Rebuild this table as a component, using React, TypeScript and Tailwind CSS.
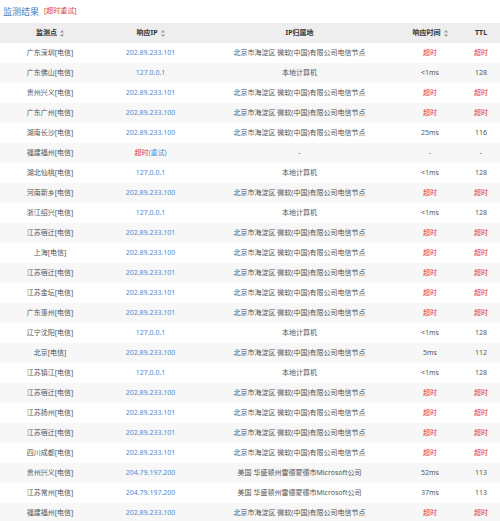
import React from "react";

type Row = {
  node: string;
  ip?: string;
  loc: string;
  time: string;
  ttl: string;
  retry?: boolean;
};

const BJ = "北京市海淀区 微软(中国)有限公司电信节点";
const LOCAL = "本地计算机";
const US = "美国 华盛顿州雷德蒙德市Microsoft公司";

const rows: Row[] = [
  { node: "广东深圳[电信]", ip: "202.89.233.101", loc: BJ, time: "超时", ttl: "超时" },
  { node: "广东佛山[电信]", ip: "127.0.0.1", loc: LOCAL, time: "<1ms", ttl: "128" },
  { node: "贵州兴义[电信]", ip: "202.89.233.101", loc: BJ, time: "超时", ttl: "超时" },
  { node: "广东广州[电信]", ip: "202.89.233.100", loc: BJ, time: "超时", ttl: "超时" },
  { node: "湖南长沙[电信]", ip: "202.89.233.100", loc: BJ, time: "25ms", ttl: "116" },
  { node: "福建福州[电信]", retry: true, loc: "-", time: "-", ttl: "-" },
  { node: "湖北仙桃[电信]", ip: "127.0.0.1", loc: LOCAL, time: "<1ms", ttl: "128" },
  { node: "河南新乡[电信]", ip: "202.89.233.100", loc: BJ, time: "超时", ttl: "超时" },
  { node: "浙江绍兴[电信]", ip: "127.0.0.1", loc: LOCAL, time: "<1ms", ttl: "128" },
  { node: "江苏宿迁[电信]", ip: "202.89.233.101", loc: BJ, time: "超时", ttl: "超时" },
  { node: "上海[电信]", ip: "202.89.233.100", loc: BJ, time: "超时", ttl: "超时" },
  { node: "江苏宿迁[电信]", ip: "202.89.233.101", loc: BJ, time: "超时", ttl: "超时" },
  { node: "江苏金坛[电信]", ip: "202.89.233.101", loc: BJ, time: "超时", ttl: "超时" },
  { node: "广东惠州[电信]", ip: "202.89.233.101", loc: BJ, time: "超时", ttl: "超时" },
  { node: "辽宁沈阳[电信]", ip: "127.0.0.1", loc: LOCAL, time: "<1ms", ttl: "128" },
  { node: "北京[电信]", ip: "202.89.233.100", loc: BJ, time: "5ms", ttl: "112" },
  { node: "江苏镇江[电信]", ip: "127.0.0.1", loc: LOCAL, time: "<1ms", ttl: "128" },
  { node: "江苏宿迁[电信]", ip: "202.89.233.100", loc: BJ, time: "超时", ttl: "超时" },
  { node: "江苏扬州[电信]", ip: "202.89.233.101", loc: BJ, time: "超时", ttl: "超时" },
  { node: "江苏宿迁[电信]", ip: "202.89.233.101", loc: BJ, time: "超时", ttl: "超时" },
  { node: "四川成都[电信]", ip: "202.89.233.101", loc: BJ, time: "超时", ttl: "超时" },
  { node: "贵州兴义[电信]", ip: "204.79.197.200", loc: US, time: "52ms", ttl: "113" },
  { node: "江苏常州[电信]", ip: "204.79.197.200", loc: US, time: "37ms", ttl: "113" },
  { node: "福建福州[电信]", ip: "202.89.233.100", loc: BJ, time: "超时", ttl: "超时" },
];

const cols = "grid grid-cols-[100px_101px_197px_64px_1fr]";

const SortIcon = () => (
  <svg width="4" height="7" viewBox="0 0 4 7" className="ml-[3px]">
    <path d="M2 0 L4 2.6 L0 2.6 Z" fill="#999" />
    <path d="M2 7 L4 4.4 L0 4.4 Z" fill="#999" />
  </svg>
);

const Val = ({ v }: { v: string }) =>
  v === "超时" ? <span className="text-[#e0393e]">{v}</span> : <span>{v}</span>;

export default function App() {
  return (
    <div
      className="w-[500px] h-[521px] overflow-hidden bg-white text-[#555]"
      style={{ fontFamily: '"Noto Sans", "Noto Sans CJK SC", sans-serif' }}
    >
      <div className="h-[23px] flex items-center pl-[3px] gap-[5px]">
        <span className="text-[9px] text-[#3d7fc4]">监测结果</span>
        <span className="text-[7px] text-[#e0393e]">[超时重试]</span>
      </div>
      <div className={`${cols} h-[20px] items-center bg-[#eeeeee] text-[7px] font-bold text-[#333]`}>
        <div className="flex items-center justify-center">监测点<SortIcon /></div>
        <div className="flex items-center justify-center">响应IP<SortIcon /></div>
        <div className="text-center">IP归属地</div>
        <div className="flex items-center justify-center">响应时间<SortIcon /></div>
        <div className="text-center">TTL</div>
      </div>
      {rows.map((r, i) => (
        <div
          key={i}
          className={`${cols} h-[20px] items-center text-[7px] ${i % 2 === 1 ? "bg-[#f7f7f7]" : "bg-white"}`}
        >
          <div className="text-center">{r.node}</div>
          <div className="text-center">
            {r.retry ? (
              <>
                <span className="text-[#e0393e]">超时</span>
                <span className="text-[#4a8bd4]">(重试)</span>
              </>
            ) : (
              <span className="text-[#4a8bd4]">{r.ip}</span>
            )}
          </div>
          <div className="text-center whitespace-nowrap">{r.loc}</div>
          <div className="text-center"><Val v={r.time} /></div>
          <div className="text-center"><Val v={r.ttl} /></div>
        </div>
      ))}
    </div>
  );
}
